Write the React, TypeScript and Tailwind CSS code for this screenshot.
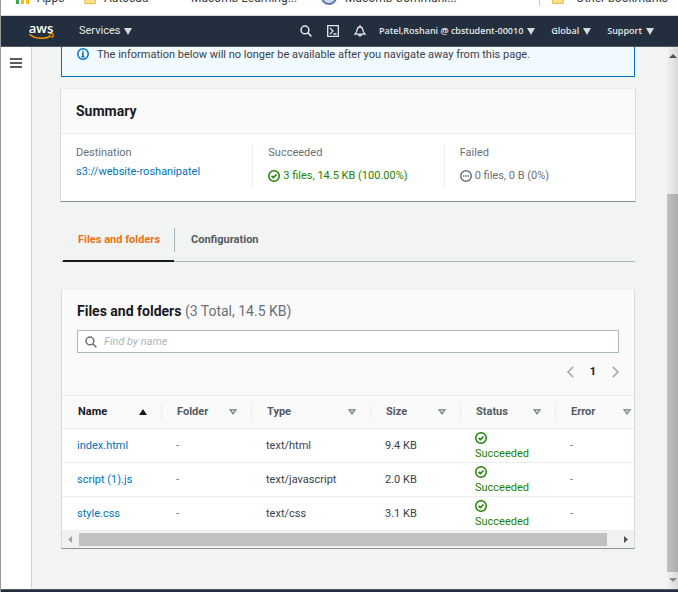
import type { ReactNode } from 'react';

type Row = { name: string; type: string; size: string };

const rows: Row[] = [
  { name: 'index.html', type: 'text/html', size: '9.4 KB' },
  { name: 'script (1).js', type: 'text/javascript', size: '2.0 KB' },
  { name: 'style.css', type: 'text/css', size: '3.1 KB' },
];

const columns = ['Name', 'Folder', 'Type', 'Size', 'Status', 'Error'];

function CheckIcon() {
  return (
    <svg viewBox="0 0 16 16" className="block h-3 w-3 shrink-0" fill="none" stroke="#1d8102" strokeWidth="2">
      <circle cx="8" cy="8" r="7" />
      <path d="M4.8 7.8 7.2 10.2 11.4 6" />
    </svg>
  );
}

function PendingIcon() {
  return (
    <svg viewBox="0 0 16 16" className="block h-3 w-3 shrink-0" fill="none" stroke="#687078" strokeWidth="2">
      <circle cx="8" cy="8" r="7" />
      <path d="M4 8h2M7 8h2M10 8h2" />
    </svg>
  );
}

function SearchIcon({ className }: { className: string }) {
  return (
    <svg viewBox="0 0 16 16" className={className} fill="none" stroke="currentColor" strokeWidth="2">
      <circle cx="6.6" cy="6.6" r="5.2" />
      <path d="m10.4 10.4 4.8 4.8" />
    </svg>
  );
}

function Caret() {
  return (
    <svg viewBox="0 0 8 7" className="h-[7px] w-2 shrink-0" fill="#d5dbdb">
      <path d="M0 0h8L4 7z" />
    </svg>
  );
}

function MenuButton({ children }: { children: ReactNode }) {
  return (
    <button type="button" className="flex items-center gap-1 whitespace-nowrap">
      {children}
      <Caret />
    </button>
  );
}

function AwsLogo() {
  return (
    <a href="#home" aria-label="AWS" className="flex w-6 flex-col items-center">
      <span className="font-['Open_Sans',sans-serif] text-[13px] leading-[10px] font-semibold text-white">aws</span>
      <svg viewBox="0 0 25 7" className="h-[7px] w-[25px]" fill="none" stroke="#f90" strokeWidth="1.5">
        <path d="M0.5 1.2C6 6 16 6.6 22 2.8" />
        <path d="M19.5 1.2C21.5.6 24 .5 24.2 1c.3.7-.4 2.7-1.4 4" strokeWidth="1.2" />
      </svg>
    </a>
  );
}

function BookmarkFolder() {
  return <span className="h-3 w-3 rounded-b-[1px] border border-[#e3bf4a] bg-[#fbe08a]" />;
}

function Bookmarks() {
  return (
    <nav
      aria-label="Bookmarks"
      className="h-4 shrink-0 overflow-hidden border-b border-[#d5d7da] bg-white pl-[15px] font-[Roboto,sans-serif] text-[12px] leading-4 text-[#3c4043]"
    >
      <div className="-mt-[10px] flex items-center whitespace-nowrap">
        <span className="flex w-[68px] items-center gap-2">
          <svg viewBox="0 0 13 12" className="h-3 w-[13px]">
            <path d="M0 8h3v4H0z" fill="#34a853" />
            <path d="M5 8h3v4H5zM10 8h3v4h-3z" fill="#fbbc04" />
          </svg>
          Apps
        </span>
        <span className="flex w-[107px] items-center gap-2">
          <BookmarkFolder />
          Autocad
        </span>
        <span className="w-[130px]">Macomb Learning...</span>
        <span className="flex items-center gap-2">
          <svg viewBox="0 0 16 16" className="h-4 w-4">
            <circle cx="8" cy="7" r="7" fill="#cfd8ee" stroke="#6478b4" strokeWidth="2" />
          </svg>
          Macomb Communi...
        </span>
        <span className="mr-[10px] ml-auto flex items-center gap-3 border-l border-[#c8cacd] pl-3">
          <BookmarkFolder />
          Other bookmarks
        </span>
      </div>
    </nav>
  );
}

function TopBar() {
  return (
    <header className="flex h-[31px] shrink-0 items-center border-b border-[#545b64] bg-[#232f3e] pr-6 pl-7 text-[#e4e8e8]">
      <AwsLogo />
      <div className="ml-[26px]">
        <MenuButton>Services</MenuButton>
      </div>
      <div className="ml-auto flex items-center gap-[15px]">
        <button type="button" aria-label="Search">
          <SearchIcon className="block h-3 w-3" />
        </button>
        <button type="button" aria-label="CloudShell">
          <svg viewBox="0 0 12 12" className="block h-3 w-3" fill="none" stroke="currentColor" strokeWidth="1.3">
            <path d="M.7.7h10.6v10.6H.7zM3 3l3 3-3 3M6.5 9h3" />
          </svg>
        </button>
        <button type="button" aria-label="Notifications">
          <svg viewBox="0 0 12 12" className="block h-3 w-3" fill="none" stroke="currentColor" strokeWidth="1.3">
            <path d="M6 0v2M.8 9.2C2.6 7.8 3 6.6 3.2 4.8 3.4 2.9 4.4 2 6 2s2.6.9 2.8 2.8c.2 1.8.6 3 2.4 4.4zM4.5 9.5c.2 2 2.8 2 3 0" />
          </svg>
        </button>
      </div>
      <div className="ml-[13px] flex items-center gap-4 font-['Open_Sans',sans-serif] text-[9px] font-semibold">
        <MenuButton>Patel,Roshani @ cbstudent-00010</MenuButton>
        <MenuButton>Global</MenuButton>
        <MenuButton>Support</MenuButton>
      </div>
    </header>
  );
}

function Alert() {
  return (
    <div
      role="status"
      className="mx-px flex h-[30px] items-start gap-2 border border-t-0 border-[#0073bb] bg-[#f1faff] pl-[15px] leading-4"
    >
      <svg viewBox="0 0 16 16" className="mt-px h-3 w-3 shrink-0" fill="none" stroke="#0073bb" strokeWidth="2">
        <circle cx="8" cy="8" r="7" />
        <path d="M8 3.5v2M6.3 7.2H8v4.3M6 11.7h4" />
      </svg>
      <span className="whitespace-nowrap">The information below will no longer be available after you navigate away from this page.</span>
    </div>
  );
}

function Summary() {
  return (
    <section className="mt-[11px] border border-[#d5dbdb] border-t-[#eaeded] border-b-[#879596] bg-white">
      <h2 className="flex h-[45px] items-center border-b border-[#eaeded] bg-[#fafafa] px-[15px] text-[14px] font-bold text-[#16191f]">
        Summary
      </h2>
      <dl className="grid grid-cols-3 pt-[11px] pb-[14px]">
        <div className="h-[42px] pl-[15px]">
          <dt className="leading-4 text-[#687078]">Destination</dt>
          <dd className="mt-[3px] leading-4">
            <a href="#bucket" className="text-[#0073bb]">s3://website-roshanipatel</a>
          </dd>
        </div>
        <div className="h-[42px] border-l border-[#eaeded] pl-[15px]">
          <dt className="leading-4 text-[#687078]">Succeeded</dt>
          <dd className="mt-[7px] flex items-center gap-[3px] leading-4 whitespace-nowrap text-[#1d8102]">
            <CheckIcon />3 files, 14.5 KB (100.00%)
          </dd>
        </div>
        <div className="h-[42px] border-l border-[#eaeded] pl-[15px]">
          <dt className="leading-4 text-[#687078]">Failed</dt>
          <dd className="mt-[7px] flex items-center gap-[3px] leading-4 whitespace-nowrap text-[#687078]">
            <PendingIcon />0 files, 0 B (0%)
          </dd>
        </div>
      </dl>
    </section>
  );
}

function Tabs() {
  return (
    <div role="tablist" className="mx-px mt-[26px] flex border-b border-[#aab7b8] pl-0.5 font-bold">
      <button type="button" role="tab" aria-selected="true" className="-mb-px h-[34px] border-b-2 border-[#16191f] pr-[14px] pb-2 pl-[15px] text-[#ec7211]">
        Files and folders
      </button>
      <span className="h-6 w-px bg-[#aab7b8]" />
      <button type="button" role="tab" aria-selected="false" className="h-6 px-4 text-[#545b64]">
        Configuration
      </button>
    </div>
  );
}

function SortMark({ active }: { active: boolean }) {
  return active ? (
    <svg viewBox="0 0 8 6" className="h-[6px] w-2" fill="#16191f">
      <path d="M0 6h8L4 0z" />
    </svg>
  ) : (
    <svg viewBox="0 0 8 6" className="h-[6px] w-2" fill="none" stroke="#879596" strokeWidth="1.6">
      <path d="M1.2.8h5.6L4 4.8z" />
    </svg>
  );
}

function FilesTable() {
  return (
    <div className="overflow-hidden">
      <table className="w-full min-w-[583px] table-fixed border-collapse text-left">
        <colgroup>
          <col className="w-[99px]" />
          <col className="w-[90px]" />
          <col className="w-[119px]" />
          <col className="w-[90px]" />
          <col className="w-[95px]" />
          <col />
        </colgroup>
        <thead>
          <tr className="h-[33px] border-y border-[#eaeded] bg-[#fafafa]">
            {columns.map((label, i) => (
              <th key={label} scope="col" className="p-0 font-bold">
                <div
                  className={
                    i === 0
                      ? 'flex h-4 items-center justify-between border-l border-transparent pr-[14px] pl-[15px] text-[#16191f]'
                      : 'flex h-4 items-center justify-between border-l border-[#eaeded] pr-[14px] pl-[15px] text-[#545b64]'
                  }
                >
                  {label}
                  <SortMark active={i === 0} />
                </div>
              </th>
            ))}
          </tr>
        </thead>
        <tbody>
          {rows.map((row) => (
            <tr key={row.name} className="h-[34px] border-b border-[#eaeded] bg-white">
              <td className="p-0 pt-0.5 pl-[15px]">
                <a href="#object" className="text-[#0073bb]">{row.name}</a>
              </td>
              <td className="p-0 pt-0.5 pl-[15px] text-[#687078]">-</td>
              <td className="p-0 pt-0.5 pl-[15px]">{row.type}</td>
              <td className="p-0 pt-0.5 pl-[15px]">{row.size}</td>
              <td className="p-0 pt-0.5 pl-[15px] leading-4 text-[#1d8102]">
                <CheckIcon />
                <div className="mt-0.5">Succeeded</div>
              </td>
              <td className="p-0 pt-0.5 pl-[15px] text-[#687078]">-</td>
            </tr>
          ))}
        </tbody>
      </table>
      <div aria-hidden="true" className="flex h-[17px] items-center bg-[#f1f1f1]">
        <svg viewBox="0 0 17 13" className="h-[13px] w-[17px] shrink-0" fill="#a3a3a3">
          <path d="M6 6.5 10 3v7z" />
        </svg>
        <div className="h-[13px] flex-[528] bg-[#c1c1c1]" />
        <div className="flex-[10]" />
        <svg viewBox="0 0 17 13" className="h-[13px] w-[17px] shrink-0" fill="#505050">
          <path d="M11 6.5 7 3v7z" />
        </svg>
      </div>
    </div>
  );
}

function Files() {
  return (
    <section className="mx-px mt-[27px] border border-[#d5dbdb] border-t-[#eaeded] border-b-[#879596] bg-[#fafafa]">
      <div className="px-[15px] pt-[11px]">
        <h2 className="text-[14px] leading-5 font-bold text-[#16191f]">
          Files and folders <span className="font-normal text-[#687078]">(3 Total, 14.5 KB)</span>
        </h2>
        <label className="mt-[9px] flex h-[23px] items-center gap-[7px] border border-[#aab7b8] bg-white px-[7px] text-[#687078]">
          <SearchIcon className="h-3 w-3 shrink-0" />
          <input
            type="text"
            aria-label="Find by name"
            placeholder="Find by name"
            className="min-w-0 flex-1 bg-transparent pt-px outline-none placeholder:text-[#aab7b8] placeholder:italic"
          />
        </label>
        <div className="mt-[10px] flex h-[18px] items-center justify-end gap-4 font-bold text-[#16191f]">
          <button type="button" aria-label="Previous page">
            <svg viewBox="0 0 7 12" className="block h-3 w-[7px]" fill="none" stroke="#aab7b8" strokeWidth="1.8">
              <path d="M6.2.8 1 6l5.2 5.2" />
            </svg>
          </button>
          <button type="button">1</button>
          <button type="button" aria-label="Next page">
            <svg viewBox="0 0 7 12" className="block h-3 w-[7px]" fill="none" stroke="#aab7b8" strokeWidth="1.8">
              <path d="M.8.8 6 6 .8 11.2" />
            </svg>
          </button>
        </div>
      </div>
      <div className="mt-[14px]">
        <FilesTable />
      </div>
    </section>
  );
}

function PageScrollbar() {
  return (
    <div aria-hidden="true" className="flex w-[11px] shrink-0 flex-col bg-linear-to-r from-[#f1f1f1] to-[#d9d9d9]">
      <svg viewBox="0 0 11 17" className="h-[17px] w-[11px]" fill="#505050">
        <path d="M2 11h8L6 7z" />
      </svg>
      <div className="flex-[130]" />
      <div className="flex-[378] bg-linear-to-r from-[#c1c1c1] to-[#adadad]" />
      <svg viewBox="0 0 11 17" className="h-[17px] w-[11px]" fill="#8b8b8b">
        <path d="M2 6h8l-4 4z" />
      </svg>
    </div>
  );
}

export default function App() {
  return (
    <div className="flex h-screen flex-col overflow-hidden border-l border-[#999] bg-[#f2f3f3] font-[Roboto,'Noto_Sans',sans-serif] text-[11px] text-[#3b4048]">
      <Bookmarks />
      <TopBar />
      <div className="flex min-h-0 flex-1">
        <aside className="w-[31px] shrink-0 border-r border-[#d0d3d3] bg-white pt-[10px] pl-[9px]">
          <button type="button" aria-label="Open navigation">
            <svg viewBox="0 0 12 10" className="block h-[10px] w-3" fill="none" stroke="#545b64" strokeWidth="2">
              <path d="M0 1h12M0 5h12M0 9h12" />
            </svg>
          </button>
        </aside>
        <main className="min-w-0 flex-1 overflow-hidden pr-[31px] pl-7">
          <Alert />
          <Summary />
          <Tabs />
          <Files />
        </main>
        <PageScrollbar />
      </div>
      <footer className="h-[3px] shrink-0 border-t border-[#545b64] bg-[#232f3e]" />
    </div>
  );
}
